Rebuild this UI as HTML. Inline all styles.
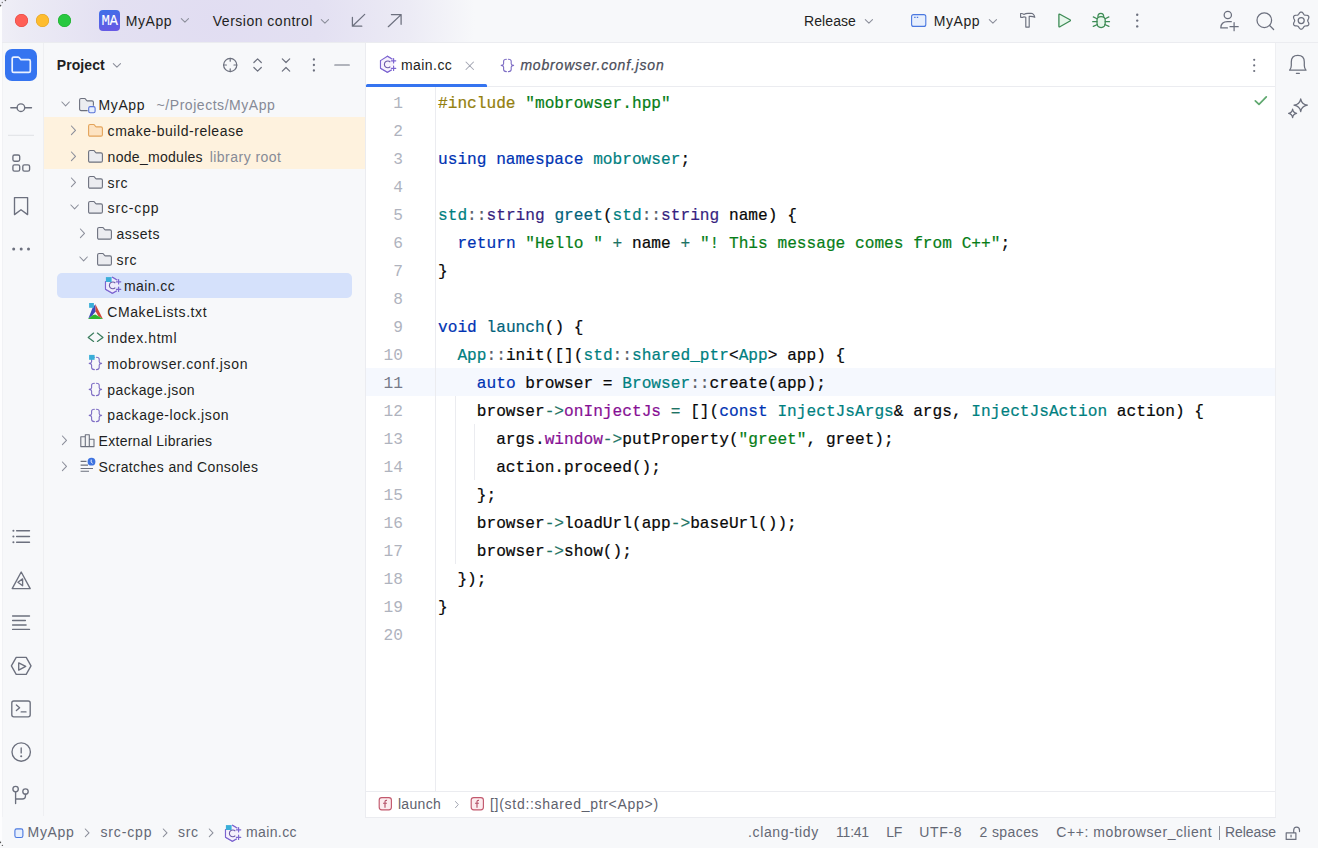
<!DOCTYPE html>
<html><head><meta charset="utf-8">
<style>
*{box-sizing:border-box;margin:0;padding:0}
html,body{width:1318px;height:848px;overflow:hidden;background:#f7f8fa;font-family:"Liberation Sans",sans-serif;color:#000}
.abs{position:absolute}
svg{position:absolute;overflow:visible}
.ic{fill:none;stroke:#6c707e;stroke-width:1.2;stroke-linecap:round;stroke-linejoin:round}
.chev{fill:none;stroke:#8b8e9a;stroke-width:1.05;stroke-linecap:round;stroke-linejoin:round}
.tt{position:absolute;white-space:nowrap;font-size:14px;line-height:16px}
.code{position:absolute;font-family:"Liberation Mono",monospace;font-size:16.16px;line-height:28px;white-space:pre;color:#080808;-webkit-text-stroke:0.2px currentColor}
.ln{position:absolute;width:40px;white-space:pre;text-align:right;font-family:"Liberation Mono",monospace;font-size:16.16px;line-height:28px;color:#afb3be}
.k{color:#0033b3}.s{color:#067d17}.pp{color:#94800f}.t{color:#008080}.cl{color:#371f80}.fn{color:#00627a}.f{color:#871094}.op{color:#1d7364}.g{color:#5a5d68}
</style></head>
<body>
<svg width="0" height="0" style="position:absolute"><defs>
<g id="fold"><path d="M0.6 2 Q0.6 0.5 2.1 0.5 H5.6 Q6.1 0.5 6.4 0.9 L7.6 2.5 Q7.9 2.9 8.4 2.9 H13 Q14.4 2.9 14.4 4.3 V10.7 Q14.4 12.1 13 12.1 H2.1 Q0.6 12.1 0.6 10.7 Z" fill="#ebecf0" stroke="#6c707e" stroke-width="1.1" stroke-linejoin="round"/></g>
<g id="foldx"><path d="M0.6 2 Q0.6 0.5 2.1 0.5 H5.6 Q6.1 0.5 6.4 0.9 L7.6 2.5 Q7.9 2.9 8.4 2.9 H13 Q14.4 2.9 14.4 4.3 V10.7 Q14.4 12.1 13 12.1 H2.1 Q0.6 12.1 0.6 10.7 Z" fill="#fde3c2" stroke="#e3a35a" stroke-width="1.1" stroke-linejoin="round"/></g>
<g id="modf"><path d="M0.6 2 Q0.6 0.5 2.1 0.5 H5.6 Q6.1 0.5 6.4 0.9 L7.6 2.5 Q7.9 2.9 8.4 2.9 H13 Q14.4 2.9 14.4 4.3 V8.6 H8.6 V12.6 H2.1 Q0.6 12.6 0.6 11.1 Z" fill="#ebecf0" stroke="none"/><path d="M8.6 12.6 H2.1 Q0.6 12.6 0.6 11.1 V2 Q0.6 0.5 2.1 0.5 H5.6 Q6.1 0.5 6.4 0.9 L7.6 2.5 Q7.9 2.9 8.4 2.9 H13 Q14.4 2.9 14.4 4.3 V7.8" fill="none" stroke="#6c707e" stroke-width="1.1" stroke-linejoin="round"/><rect x="9.7" y="8.6" width="6.4" height="6.2" rx="1.5" fill="#e7effd" stroke="#5a74d8" stroke-width="1.1"/></g>
<g id="cpp"><path d="M1.5 5.6 V13.3 L8.4 17.3 L12.3 15 M8.4 1.3 L13 4" fill="none" stroke="#7c64d0" stroke-width="1.1" stroke-linejoin="round" stroke-linecap="round"/><path d="M1.5 5.6 V13.3 L8.4 17.3 L12.3 15 V11 H15.3 V4.5 L8.4 1.3 L1.5 5.3 Z" fill="#f4eefc" stroke="none" opacity="0.8"/><path d="M1.5 5.6 V13.3 L8.4 17.3 L12.3 15 M8.4 1.3 L13 4" fill="none" stroke="#7c64d0" stroke-width="1.1" stroke-linejoin="round" stroke-linecap="round"/><path d="M11.3 7.1 A3.4 3.4 0 1 0 11.3 11.7" fill="none" stroke="#6c5aa8" stroke-width="1.1"/><path d="M12.4 5.8 H16.8 M14.6 3.6 V8 M12.4 13.3 H16.8 M14.6 11.1 V15.5" stroke="#7c64d0" stroke-width="1.15" stroke-linecap="round"/></g>
<g id="cmk"><path d="M8.4 1.3 L5.6 4.8 L1.2 16 L5.5 12.3 L8.6 8.6 Z" fill="#3e48b8"/><path d="M8.4 1.3 L15.9 16 L11.4 13.2 L8.6 8.6 Z" fill="#cf4a3c"/><path d="M1.2 16 L15.9 16 L11.4 13.2 L8.2 11.4 L5.5 12.3 Z" fill="#2db52f"/><rect x="2.1" y="0" width="4.8" height="4.8" fill="#3aaed8"/></g>
<g id="htm"><path d="M6.6 1.1 L1.2 5.4 L6.6 9.4 M10.4 1.1 L16 5.4 L10.4 9.4" fill="none" stroke="#3b7d5e" stroke-width="1.25" stroke-linecap="round" stroke-linejoin="round"/></g>
<g id="jsn"><path d="M6.4 2.2 Q3.6 2.2 3.6 4.2 V6.8 Q3.6 8.1 1.2 8.4 Q3.6 8.7 3.6 10 V12.6 Q3.6 14.6 6.4 14.6 M8.4 2.2 Q11.2 2.2 11.2 4.2 V6.8 Q11.2 8.1 13.6 8.4 Q11.2 8.7 11.2 10 V12.6 Q11.2 14.6 8.4 14.6" fill="none" stroke="#7d6cc4" stroke-width="1.1" stroke-linecap="round" stroke-linejoin="round"/></g>
<g id="lib"><path d="M1.8 3.8 H6.3 V13.6 H1.8 Z M6.3 1.8 H10.3 V13.6 H6.3 Z M10.3 6.2 H15 V13.6 H10.3 Z" fill="#f2f3f5" stroke="#6c707e" stroke-width="1.1" stroke-linejoin="round"/></g>
<g id="scr"><path d="M1.6 7.4 H7.5 M1.6 11.1 H9 M1.6 14.5 H14 M1.6 17.3 H10" stroke="#6c707e" stroke-width="1.1"/><circle cx="12.5" cy="7.7" r="3.9" fill="#3e73e0"/><path d="M12.2 5.6 V7.9 L13.6 9.5" stroke="#fff" stroke-width="0.9" fill="none"/></g>
</defs></svg>

<!-- title bar -->
<div class="abs" style="left:0;top:0;width:1318px;height:42px;background:radial-gradient(ellipse 260px 190px at 215px 20px,#e1ddf2 0%,#e3e0f2 40%,#ecebf5 75%,#f7f8fa 100%)"></div>
<div class="abs" style="left:0;top:42px;width:1318px;height:1px;background:#ebecf0"></div>
<div class="abs" style="left:14.7px;top:13.9px;width:13px;height:13px;border-radius:50%;background:#ff5f57;box-shadow:inset 0 0 0 0.6px #e0443e"></div>
<div class="abs" style="left:36.1px;top:13.9px;width:13px;height:13px;border-radius:50%;background:#febc2e;box-shadow:inset 0 0 0 0.6px #dea123"></div>
<div class="abs" style="left:57.8px;top:13.9px;width:13px;height:13px;border-radius:50%;background:#28c840;box-shadow:inset 0 0 0 0.6px #1aab29"></div>
<div class="abs" style="left:99px;top:10px;width:21px;height:21px;border-radius:4px;background:linear-gradient(170deg,#3d70e8,#6a57e4);color:#fff;font-family:'Liberation Mono',monospace;font-size:14px;line-height:22px;text-align:center;letter-spacing:-0.4px;-webkit-text-stroke:0.1px #fff">MA</div>
<svg style="left:180px;top:17px" width="10" height="7"><path d="M1.3 1.6 L4.9 5.2 L8.5 1.6" class="chev"/></svg>
<svg style="left:320px;top:17.5px" width="10" height="7"><path d="M1.3 1.6 L4.9 5.2 L8.5 1.6" class="chev"/></svg>
<svg style="left:0;top:0" width="1318" height="42"><g fill="none" stroke="#6c707e" stroke-width="1.25" stroke-linecap="round" stroke-linejoin="round">
<path d="M364.7 14.4 L352.4 26.2 M352.4 17.4 V26.2 H361.8"/>
<path d="M388.3 26.7 L401.1 14.6 M391.4 14.6 H401.1 V24.3"/>
<path d="M1020.6 13.6 Q1022.4 13.3 1023.8 14.4 Q1025.6 13.3 1028 13.3 H1031 Q1033.9 13.5 1034.8 17.3 Q1032.6 16 1029.2 16.4 V27.1 H1025.8 V17.2 Q1024.6 16.8 1023.7 16.9 Q1022.2 17.6 1020.6 17.3 Z" stroke-width="1.15"/>
<circle cx="1227.8" cy="15.05" r="3.65"/>
<path d="M1231.3 21.7 H1227.5 Q1220.9 21.7 1220.8 27.9 H1227.4 M1230 26.7 H1238.2 M1234.1 22.7 V30.7"/>
<circle cx="1264.3" cy="20.2" r="7.3"/><path d="M1269.6 25.5 L1273.6 29.5"/>
<path d="M1307.70 20.60 L1307.77 21.03 L1307.95 21.49 L1308.21 21.99 L1308.49 22.55 L1308.73 23.16 L1308.86 23.77 L1308.84 24.37 L1308.65 24.90 L1308.28 25.33 L1307.78 25.65 L1307.18 25.84 L1306.54 25.94 L1305.91 25.97 L1305.34 26.00 L1304.86 26.07 L1304.45 26.23 L1304.11 26.50 L1303.81 26.89 L1303.50 27.37 L1303.15 27.89 L1302.75 28.40 L1302.28 28.82 L1301.76 29.10 L1301.20 29.20 L1300.64 29.10 L1300.12 28.82 L1299.65 28.40 L1299.25 27.89 L1298.90 27.37 L1298.59 26.89 L1298.29 26.50 L1297.95 26.23 L1297.54 26.07 L1297.06 26.00 L1296.49 25.97 L1295.86 25.94 L1295.22 25.84 L1294.62 25.65 L1294.12 25.33 L1293.75 24.90 L1293.56 24.37 L1293.54 23.77 L1293.67 23.16 L1293.91 22.55 L1294.19 21.99 L1294.45 21.49 L1294.63 21.03 L1294.70 20.60 L1294.63 20.17 L1294.45 19.71 L1294.19 19.21 L1293.91 18.65 L1293.67 18.04 L1293.54 17.43 L1293.56 16.83 L1293.75 16.30 L1294.12 15.87 L1294.62 15.55 L1295.22 15.36 L1295.86 15.26 L1296.49 15.23 L1297.06 15.20 L1297.54 15.13 L1297.95 14.97 L1298.29 14.70 L1298.59 14.31 L1298.90 13.83 L1299.25 13.31 L1299.65 12.80 L1300.12 12.38 L1300.64 12.10 L1301.20 12.00 L1301.76 12.10 L1302.28 12.38 L1302.75 12.80 L1303.15 13.31 L1303.50 13.83 L1303.81 14.31 L1304.11 14.70 L1304.45 14.97 L1304.86 15.13 L1305.34 15.20 L1305.91 15.23 L1306.54 15.26 L1307.18 15.36 L1307.78 15.55 L1308.28 15.87 L1308.65 16.30 L1308.84 16.83 L1308.86 17.43 L1308.73 18.04 L1308.49 18.65 L1308.21 19.21 L1307.95 19.71 L1307.77 20.17 L1307.70 20.60 Z" stroke-width="1.2"/>
<circle cx="1301.2" cy="20.6" r="3"/>
</g>
<path d="M1058.9 14.8 Q1058.9 13.8 1059.9 14.3 L1070 19.8 Q1070.8 20.4 1070 21 L1059.9 26.8 Q1058.9 27.3 1058.9 26.3 Z" fill="#e6f6eb" stroke="#3d8b55" stroke-width="1.3" stroke-linejoin="round"/>
<g fill="none" stroke="#3d8b55" stroke-width="1.25" stroke-linecap="round" stroke-linejoin="round">
<path d="M1097.9 16.6 Q1097.9 13.3 1100.8 13.3 Q1103.7 13.3 1103.7 16.6" fill="#e6f6eb"/>
<path d="M1097 20 Q1097 16.6 1101.1 16.6 Q1105.2 16.6 1105.2 20 V23.3 Q1105.2 27.5 1101.1 27.5 Q1097 27.5 1097 23.3 Z" fill="#e6f6eb"/>
<path d="M1093.3 16.9 L1097 18.7 M1092.7 21.7 H1097 M1093.3 26.4 L1097.4 24.5 M1108.9 16.9 L1105.2 18.7 M1109.5 21.7 H1105.2 M1108.9 26.4 L1104.8 24.5"/>
</g>
<g fill="#6c707e"><circle cx="1137.2" cy="14.8" r="1.2"/><circle cx="1137.2" cy="20.6" r="1.2"/><circle cx="1137.2" cy="26.4" r="1.2"/></g>
</svg>

<svg style="left:864px;top:17.5px" width="10" height="7"><path d="M1.3 1.6 L4.9 5.2 L8.5 1.6" class="chev"/></svg>
<svg style="left:911px;top:14px" width="16" height="13"><rect x="0.6" y="0.6" width="14.2" height="11.8" rx="2" fill="#e7effd" stroke="#4a78e0" stroke-width="1.1"/><path d="M3.2 3.4 h1.4 M5.8 3.4 h1.4" stroke="#4a78e0" stroke-width="1.1"/></svg>
<svg style="left:987.5px;top:17.5px" width="10" height="7"><path d="M1.3 1.6 L4.9 5.2 L8.5 1.6" class="chev"/></svg>
<!-- left stripe -->
<div class="abs" style="left:43px;top:43px;width:1px;height:773px;background:#eeeff2"></div>
<div class="abs" style="left:5px;top:48.7px;width:32px;height:32px;border-radius:7px;background:#3574f0"></div>
<svg style="left:11px;top:56px" width="21" height="18"><path d="M1.2 2.6 Q1.2 1.1 2.7 1.1 H7 Q7.6 1.1 8 1.5 L9.6 3.3 Q10 3.7 10.6 3.7 H17.8 Q19.3 3.7 19.3 5.2 V14.9 Q19.3 16.4 17.8 16.4 H2.7 Q1.2 16.4 1.2 14.9 Z" fill="none" stroke="#eaf1ff" stroke-width="1.7" stroke-linejoin="round"/></svg>
<svg style="left:0;top:0" width="44" height="848"><g fill="none" stroke="#6c707e" stroke-width="1.35" stroke-linecap="round" stroke-linejoin="round">
<path d="M10.8 107.7 H17.1 M24.8 107.7 H31.5"/><circle cx="20.9" cy="107.7" r="3.8"/>
<rect x="12.9" y="155" width="6.8" height="6.2" rx="1.6"/><rect x="12.9" y="164.9" width="6.8" height="6.2" rx="1.6"/><rect x="22.8" y="164.9" width="6.8" height="6.2" rx="1.6"/>
<path d="M14.5 197.6 H27.6 V214.6 L21 209.8 L14.5 214.6 Z"/>
<path d="M16.6 530.7 H29.5 M16.6 536.5 H29.5 M16.6 542.2 H29.5"/>
<path d="M21.2 572 L30.2 588.6 H12.2 Z M22.6 578.9 V585.7 L17.9 582.3 Z"/>
<path d="M12.6 616 H29.5 M12.6 620.5 H25.4 M12.6 625 H26.1 M12.6 629.4 H29.5"/>
<path d="M16.2 657.4 H26.2 L31 665.9 L26.2 674.4 H16.2 L11.4 665.9 Z M18.7 662.8 L25.7 666.4 L18.7 670.1 Z"/>
<rect x="11.8" y="701" width="18.4" height="15.8" rx="2"/><path d="M16.4 705 L19.6 707.8 L16.4 710.6 M21.2 711.9 H26"/>
<circle cx="21.2" cy="752" r="9.2"/><path d="M21.2 747.9 V752.9"/>
<circle cx="15.6" cy="789.1" r="2.7"/><circle cx="25.5" cy="791.5" r="2.7"/><path d="M15.6 791.8 V803.6 M25.5 794.2 V795.8 Q25.5 799 22.3 799 H15.6"/>
</g>
<path d="M8 135.3 H34" stroke="#dfe1e5" stroke-width="1"/>
<g fill="#6c707e"><circle cx="13.7" cy="249" r="1.5"/><circle cx="21.2" cy="249" r="1.5"/><circle cx="28.5" cy="249" r="1.5"/><circle cx="13.4" cy="530.7" r="1.05"/><circle cx="13.4" cy="536.5" r="1.05"/><circle cx="13.4" cy="542.2" r="1.05"/><circle cx="21.2" cy="756.2" r="1.05"/></g>
</svg>

<!-- project panel -->
<svg style="left:111.5px;top:61.5px" width="10" height="7"><path d="M1.3 1.6 L4.9 5.2 L8.5 1.6" class="chev"/></svg>
<svg style="left:0;top:0" width="1318" height="100"><g class="ic" stroke-width="1.2">
<circle cx="230.2" cy="65" r="6.6"/><path d="M230.2 58.4 V61.2 M230.2 68.8 V71.6 M223.6 65 H226.4 M234 65 H236.8"/>
<path d="M253.9 62.5 L257.6 58.8 L261.3 62.5 M253.9 67.5 L257.6 71.2 L261.3 67.5"/>
<path d="M282.3 58.8 L286 62.5 L289.7 58.8 M282.3 71.2 L286 67.5 L289.7 71.2"/>
<path d="M334.8 65 H349.3"/>
</g><g fill="#6c707e"><circle cx="313.9" cy="59.5" r="1.15"/><circle cx="313.9" cy="65" r="1.15"/><circle cx="313.9" cy="70.5" r="1.15"/></g></svg>
<div class="abs" style="left:44px;top:116.8px;width:321px;height:52px;background:#fef2de"></div>
<div class="abs" style="left:56.5px;top:272.6px;width:295.6px;height:25.8px;border-radius:5px;background:#d5e1fb"></div>
<svg style="left:61px;top:100.0px" width="10" height="8"><path d="M0.9 2 L4.6 5.9 L8.3 2" class="chev"/></svg><svg style="left:79px;top:98.0px" width="17" height="16"><use href="#modf"/></svg><svg style="left:70px;top:124.87px" width="8" height="11"><path d="M1.4 1 L5.5 5.3 L1.4 9.6" class="chev"/></svg><svg style="left:88px;top:123.87px" width="16" height="14"><use href="#foldx"/></svg><svg style="left:70px;top:150.74px" width="8" height="11"><path d="M1.4 1 L5.5 5.3 L1.4 9.6" class="chev"/></svg><svg style="left:88px;top:149.74px" width="16" height="14"><use href="#fold"/></svg><svg style="left:70px;top:176.61px" width="8" height="11"><path d="M1.4 1 L5.5 5.3 L1.4 9.6" class="chev"/></svg><svg style="left:88px;top:175.61px" width="16" height="14"><use href="#fold"/></svg><svg style="left:70px;top:203.48px" width="10" height="8"><path d="M0.9 2 L4.6 5.9 L8.3 2" class="chev"/></svg><svg style="left:88px;top:201.48px" width="16" height="14"><use href="#fold"/></svg><svg style="left:79px;top:228.35px" width="8" height="11"><path d="M1.4 1 L5.5 5.3 L1.4 9.6" class="chev"/></svg><svg style="left:97px;top:227.35px" width="16" height="14"><use href="#fold"/></svg><svg style="left:79px;top:255.22px" width="10" height="8"><path d="M0.9 2 L4.6 5.9 L8.3 2" class="chev"/></svg><svg style="left:97px;top:253.22px" width="16" height="14"><use href="#fold"/></svg><svg style="left:104px;top:276.09px" width="18" height="19"><use href="#cpp"/><rect x="1.9" y="1.1" width="5.7" height="4.9" fill="#3aaed8"/></svg><svg style="left:87px;top:302.96px" width="17" height="17"><use href="#cmk"/></svg><svg style="left:87px;top:332.03px" width="17" height="13"><use href="#htm"/></svg><svg style="left:88px;top:355.0px" width="16" height="16"><use href="#jsn"/><rect x="1.1" y="-0.1" width="5.5" height="4.9" fill="#3aaed8"/></svg><svg style="left:88px;top:380.87px" width="16" height="16"><use href="#jsn"/></svg><svg style="left:88px;top:406.74px" width="16" height="16"><use href="#jsn"/></svg><svg style="left:61px;top:435.31px" width="8" height="11"><path d="M1.4 1 L5.5 5.3 L1.4 9.6" class="chev"/></svg><svg style="left:79px;top:432.71px" width="17" height="15"><use href="#lib"/></svg><svg style="left:61px;top:461.18px" width="8" height="11"><path d="M1.4 1 L5.5 5.3 L1.4 9.6" class="chev"/></svg><svg style="left:79px;top:453.98px" width="18" height="18"><use href="#scr"/></svg>

<!-- editor -->
<div class="abs" style="left:365px;top:43px;width:1px;height:774px;background:#ebecf0"></div>
<div class="abs" style="left:366px;top:43px;width:909px;height:774px;background:#fff"></div>
<div class="abs" style="left:1275px;top:43px;width:1px;height:774px;background:#eeeff2"></div>
<div class="abs" style="left:366px;top:86px;width:909px;height:1px;background:#ebecf0"></div>
<div class="abs" style="left:366px;top:84px;width:121px;height:3px;background:#3574f0;border-radius:1.5px 1.5px 0 0"></div>
<svg style="left:378.5px;top:55px" width="18" height="19"><use href="#cpp"/><path d="M1.5 5.6 L8.4 1.3" stroke="#7c64d0" stroke-width="1.1" stroke-linecap="round"/></svg>
<svg style="left:464.5px;top:61px" width="10" height="10"><path d="M1 1 L8.5 8.5 M8.5 1 L1 8.5" stroke="#a4a7b3" stroke-width="1.05" stroke-linecap="round"/></svg>
<svg style="left:499.5px;top:57px" width="16" height="16"><use href="#jsn"/></svg>
<svg style="left:1252px;top:58px" width="4" height="15"><circle cx="2.2" cy="1.8" r="1.1" fill="#6c707e"/><circle cx="2.2" cy="7.4" r="1.1" fill="#6c707e"/><circle cx="2.2" cy="13" r="1.1" fill="#6c707e"/></svg>
<div class="abs" style="left:366px;top:368px;width:909px;height:28px;background:#f5f8fe"></div>
<div class="abs" style="left:435px;top:87px;width:1px;height:704px;background:#ebecf0"></div>
<div class="abs" style="left:455px;top:396px;width:1px;height:168px;background:#ebecf0"></div>
<div class="abs" style="left:474px;top:424px;width:1px;height:56px;background:#ebecf0"></div>
<svg style="left:1254px;top:95px" width="14" height="12"><path d="M1.3 5.8 L5 9.4 L12.3 1.8" fill="none" stroke="#5fa86f" stroke-width="1.7" stroke-linecap="round" stroke-linejoin="round"/></svg>
<div class="ln" style="left:363px;top:89.5px">1
2
3
4
5
6
7
8
9
10
<span style="color:#767a8a">11</span>
12
13
14
15
16
17
18
19
20</div>
<div class="code" style="left:438px;top:89.7px"><span class="pp">#include</span> <span class="s">"mobrowser.hpp"</span>

<span class="k">using namespace</span> <span class="t">mobrowser</span>;

<span class="t">std</span><span class="g">::</span><span class="cl">string</span> <span class="fn">greet</span>(<span class="t">std</span><span class="g">::</span><span class="cl">string</span> name) {
  <span class="k">return</span> <span class="s">"Hello "</span> <span class="op">+</span> name <span class="op">+</span> <span class="s">"! This message comes from C++"</span>;
}

<span class="k">void</span> <span class="fn">launch</span>() {
  <span class="t">App</span><span class="g">::</span>init([](<span class="t">std</span><span class="g">::</span><span class="t">shared_ptr</span>&lt;<span class="t">App</span>&gt; app) {
    <span class="k">auto</span> browser = <span class="t">Browser</span><span class="g">::</span>create(app);
    browser<span class="op">-&gt;</span><span class="f">onInjectJs</span> <span class="op">=</span> [](<span class="k">const</span> <span class="t">InjectJsArgs</span>&amp; args, <span class="t">InjectJsAction</span> action) {
      args.<span class="f">window</span><span class="op">-&gt;</span>putProperty(<span class="s">"greet"</span>, greet);
      action.proceed();
    };
    browser<span class="op">-&gt;</span>loadUrl(app<span class="op">-&gt;</span>baseUrl());
    browser<span class="op">-&gt;</span>show();
  });
}
</div>
<div class="abs" style="left:366px;top:791px;width:909px;height:1px;background:#ebecf0"></div>
<svg style="left:378px;top:797px" width="15" height="14"><rect x="1.2" y="0.6" width="12.2" height="12.2" rx="2.5" fill="#fcecef" stroke="#c2586d" stroke-width="1.15"/><path d="M9 3.4 Q7.3 3 7 4.5 V10.8 M5 6.2 H8.9" fill="none" stroke="#b5536a" stroke-width="1.15"/></svg>
<svg style="left:453.5px;top:800px" width="6" height="10"><path d="M1.2 1.2 L4.3 4.6 L1.2 8" fill="none" stroke="#a4a7b3" stroke-width="1"/></svg>
<svg style="left:469.5px;top:797px" width="15" height="14"><rect x="1.2" y="0.6" width="12.2" height="12.2" rx="2.5" fill="#fcecef" stroke="#c2586d" stroke-width="1.15"/><path d="M9 3.4 Q7.3 3 7 4.5 V10.8 M5 6.2 H8.9" fill="none" stroke="#b5536a" stroke-width="1.15"/></svg>

<!-- right stripe -->
<svg style="left:1274px;top:0" width="44" height="200"><g fill="none" stroke="#6c707e" stroke-width="1.25" stroke-linecap="round" stroke-linejoin="round">
<path d="M15.6 70.2 H32 Q30.3 68.2 30.3 65.5 V62 Q30.3 55.4 23.8 55.4 Q17.3 55.4 17.3 62 V65.5 Q17.3 68.2 15.6 70.2 Z"/><path d="M22.4 73.3 H25.4"/>
<path d="M26.7 98.8 Q27.6 104.3 33.4 105.2 Q27.6 106.1 26.7 111.6 Q25.8 106.1 20 105.2 Q25.8 104.3 26.7 98.8 Z"/>
<path d="M18.6 109.2 Q19.1 112.9 22.6 113.4 Q19.1 113.9 18.6 117.6 Q18.1 113.9 14.6 113.4 Q18.1 112.9 18.6 109.2 Z"/>
</g></svg>

<!-- status bar -->
<div class="abs" style="left:365px;top:817px;width:911px;height:1px;background:#ebecf0"></div>
<svg style="left:14px;top:828px" width="10" height="11"><rect x="0.9" y="0.9" width="8" height="8.6" rx="1.8" fill="#e7effd" stroke="#4a78e0" stroke-width="1.1"/></svg>
<svg style="left:84px;top:828px" width="7" height="10"><path d="M1.3 1 L5 4.8 L1.3 8.6" class="chev" stroke="#7d818d"/></svg>
<svg style="left:161.5px;top:828px" width="7" height="10"><path d="M1.3 1 L5 4.8 L1.3 8.6" class="chev" stroke="#7d818d"/></svg>
<svg style="left:208px;top:828px" width="7" height="10"><path d="M1.3 1 L5 4.8 L1.3 8.6" class="chev" stroke="#7d818d"/></svg>
<svg style="left:224px;top:823.5px" width="18" height="19"><use href="#cpp"/><rect x="1.9" y="1.1" width="5.7" height="4.9" fill="#3aaed8"/></svg>
<div class="abs" style="left:1218.5px;top:825.5px;width:1.2px;height:14.5px;background:#8d909b"></div>
<svg style="left:1285px;top:826px" width="16" height="15"><path d="M1.2 6.9 H10.9 V13.4 H1.2 Z M8.7 6.9 V4.2 Q8.7 1.2 11.6 1.2 Q14.5 1.2 14.5 4.2 V5.6 M6.05 9 V11" fill="none" stroke="#6c707e" stroke-width="1.2" stroke-linecap="round" stroke-linejoin="round"/></svg>

<div class="abs" style="left:0;top:6px;width:1.5px;height:834px;background:#fdfdfe"></div>
<div class="abs" style="left:2px;top:43px;width:1px;height:774px;background:#f1f2f5"></div>
<svg style="left:0;top:0" width="10" height="10"><circle cx="0.4" cy="5.6" r="0.9" fill="#555"/><circle cx="2.3" cy="2.5" r="0.7" fill="#777"/><circle cx="5.4" cy="0.5" r="0.8" fill="#666"/></svg>
<svg style="left:0;top:838px" width="10" height="10"><circle cx="0.3" cy="4.3" r="0.9" fill="#555"/><circle cx="2.4" cy="7.4" r="0.7" fill="#666"/></svg>
<div class="tt" style="left:125.7px;top:13px;letter-spacing:0.564px;color:#1e1f22">MyApp</div><div class="tt" style="left:212.8px;top:13px;letter-spacing:0.499px;color:#1e1f22">Version control</div><div class="tt" style="left:804.1px;top:13px;letter-spacing:0.061px;color:#1e1f22">Release</div><div class="tt" style="left:933.8px;top:13px;letter-spacing:0.564px;color:#1e1f22">MyApp</div><div class="tt" style="left:56.7px;top:57px;letter-spacing:0.104px;font-weight:bold;color:#1e1f22">Project</div><div class="tt" style="left:98.6px;top:97.0px;letter-spacing:0.564px;color:#1e1f22">MyApp</div><div class="tt" style="left:156.6px;top:97.0px;letter-spacing:0.543px;color:#868a96">~/Projects/MyApp</div><div class="tt" style="left:107.6px;top:122.87px;letter-spacing:0.539px;color:#1e1f22">cmake-build-release</div><div class="tt" style="left:107.6px;top:148.74px;letter-spacing:0.287px;color:#1e1f22">node_modules</div><div class="tt" style="left:209.7px;top:148.74px;letter-spacing:0.472px;color:#868a96">library root</div><div class="tt" style="left:107.6px;top:174.61px;letter-spacing:0.576px;color:#1e1f22">src</div><div class="tt" style="left:107.6px;top:200.48px;letter-spacing:0.842px;color:#1e1f22">src-cpp</div><div class="tt" style="left:116.6px;top:226.35px;letter-spacing:0.472px;color:#1e1f22">assets</div><div class="tt" style="left:116.6px;top:252.22px;letter-spacing:0.576px;color:#1e1f22">src</div><div class="tt" style="left:123.9px;top:278.09px;letter-spacing:0.438px;color:#1e1f22">main.cc</div><div class="tt" style="left:107.3px;top:303.96px;letter-spacing:0.571px;color:#1e1f22">CMakeLists.txt</div><div class="tt" style="left:107.3px;top:329.83px;letter-spacing:0.599px;color:#1e1f22">index.html</div><div class="tt" style="left:107.3px;top:355.7px;letter-spacing:0.652px;color:#1e1f22">mobrowser.conf.json</div><div class="tt" style="left:107.3px;top:381.57px;letter-spacing:0.440px;color:#1e1f22">package.json</div><div class="tt" style="left:107.3px;top:407.44px;letter-spacing:0.573px;color:#1e1f22">package-lock.json</div><div class="tt" style="left:98.6px;top:433.31px;letter-spacing:0.270px;color:#1e1f22">External Libraries</div><div class="tt" style="left:98.6px;top:459.18px;letter-spacing:0.365px;color:#1e1f22">Scratches and Consoles</div><div class="tt" style="left:401.0px;top:57px;letter-spacing:0.438px;color:#1e1f22">main.cc</div><div class="tt" style="left:520.4px;top:57px;letter-spacing:0.818px;font-style:italic;color:#4a4d59;-webkit-text-stroke:0.25px #4a4d59">mobrowser.conf.json</div><div class="tt" style="left:397.9px;top:796px;letter-spacing:0.339px;color:#5e616d">launch</div><div class="tt" style="left:490.0px;top:796px;letter-spacing:0.710px;color:#5e616d">[](std::shared_ptr&lt;App&gt;)</div><div class="tt" style="left:27.6px;top:823.6px;letter-spacing:0.644px;color:#646875">MyApp</div><div class="tt" style="left:100.5px;top:823.6px;letter-spacing:0.842px;color:#646875">src-cpp</div><div class="tt" style="left:178.1px;top:823.6px;letter-spacing:0.576px;color:#646875">src</div><div class="tt" style="left:245.9px;top:823.6px;letter-spacing:0.409px;color:#646875">main.cc</div><div class="tt" style="left:748.0px;top:823.6px;letter-spacing:0.635px;color:#646875">.clang-tidy</div><div class="tt" style="left:836.1px;top:823.6px;letter-spacing:-0.240px;color:#646875">11:41</div><div class="tt" style="left:886.2px;top:823.6px;letter-spacing:-0.172px;color:#646875">LF</div><div class="tt" style="left:919.2px;top:823.6px;letter-spacing:0.666px;color:#646875">UTF-8</div><div class="tt" style="left:979.4px;top:823.6px;letter-spacing:0.419px;color:#646875">2 spaces</div><div class="tt" style="left:1056.3px;top:823.6px;letter-spacing:0.564px;color:#646875">C++: mobrowser_client</div><div class="tt" style="left:1225.0px;top:823.6px;letter-spacing:-0.054px;color:#646875">Release</div>
</body></html>
